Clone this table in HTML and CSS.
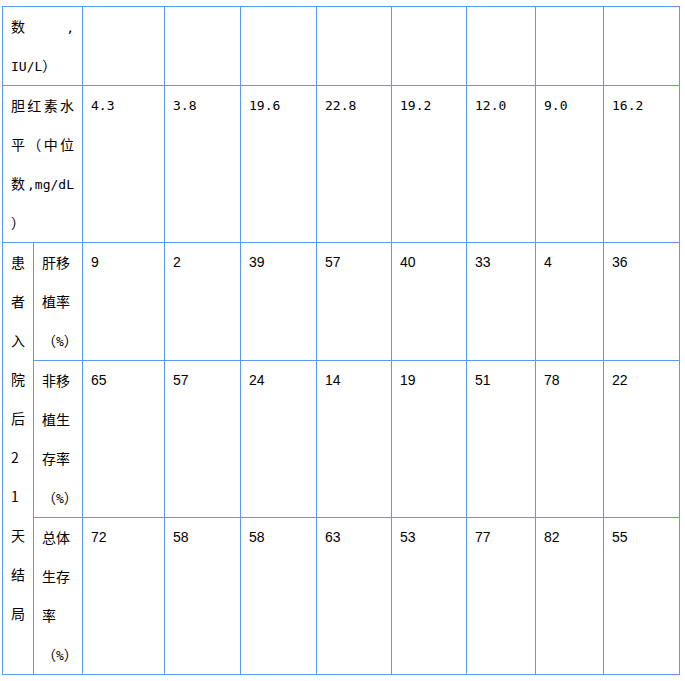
FILE: index.html
```html
<!DOCTYPE html>
<html lang="zh">
<head>
<meta charset="utf-8">
<title>表格</title>
<link rel="stylesheet" href="styles.css">
</head>
<body>
<table class="data">
  <colgroup>
    <col class="w31"><col class="w49"><col class="w82"><col class="w76"><col class="w76">
    <col class="w75"><col class="w75"><col class="w69"><col class="w68"><col class="w76">
  </colgroup>
  <tbody>
    <tr>
      <th colspan="2" class="lbl"><span class="jl">数 <span class="lat">,</span></span><span class="lat">IU/L</span>）</th>
      <td></td><td></td><td></td><td></td><td></td><td></td><td></td><td></td>
    </tr>
    <tr>
      <th colspan="2" class="lbl"><span class="jl">胆红素水</span><span class="jl">平（中位</span><span class="jl">数<span class="lat">,mg/dL</span></span>）</th>
      <td class="mono">4.3</td><td class="mono">3.8</td><td class="mono">19.6</td><td class="mono">22.8</td>
      <td class="mono">19.2</td><td class="mono">12.0</td><td class="mono">9.0</td><td class="mono">16.2</td>
    </tr>
    <tr>
      <th rowspan="3" class="vert">患者入院后21天结局</th>
      <th class="sub">肝移植率<span class="pct">（<span class="lat">%</span>）</span></th>
      <td class="num">9</td><td class="num">2</td><td class="num">39</td><td class="num">57</td>
      <td class="num">40</td><td class="num">33</td><td class="num">4</td><td class="num">36</td>
    </tr>
    <tr>
      <th class="sub">非移植生存率<span class="pct">（<span class="lat">%</span>）</span></th>
      <td class="num">65</td><td class="num">57</td><td class="num">24</td><td class="num">14</td>
      <td class="num">19</td><td class="num">51</td><td class="num">78</td><td class="num">22</td>
    </tr>
    <tr>
      <th class="sub">总体生存率<span class="pct">（<span class="lat">%</span>）</span></th>
      <td class="num">72</td><td class="num">58</td><td class="num">58</td><td class="num">63</td>
      <td class="num">53</td><td class="num">77</td><td class="num">82</td><td class="num">55</td>
    </tr>
  </tbody>
</table>
</body>
</html>
```
FILE: styles.css
```css
html, body {
  margin: 0;
  background: #fff;
}
body {
  padding: 6px 0 0 2px;
  font-family: "Noto Sans CJK SC", sans-serif;
  font-size: 14px;
  color: #000;
}
.data {
  border-collapse: collapse;
  table-layout: fixed;
  width: 677px;
}
.w31 { width: 31px; }
.w49 { width: 49px; }
.w82 { width: 82px; }
.w76 { width: 76px; }
.w75 { width: 75px; }
.w69 { width: 69px; }
.w68 { width: 68px; }
.data th,
.data td {
  border: 1px solid #5b9bf5;
  padding: 0 8px;
  height: 0;
  line-height: 39px;
  vertical-align: top;
  text-align: left;
  font-weight: normal;
}
.lbl, .sub {
  text-align: justify;
}
.jl {
  display: block;
  text-align: justify;
  text-align-last: justify;
}
.pct {
  white-space: nowrap;
}
.lat {
  font-family: "DejaVu Sans Mono", monospace;
  font-size: 13px;
  line-height: 1;
}
.data td.mono {
  font-family: "DejaVu Sans Mono", monospace;
  font-size: 13px;
}
.num {
  font-family: "Liberation Sans", Arial, sans-serif;
}
.vert {
  word-break: break-all;
}
```
